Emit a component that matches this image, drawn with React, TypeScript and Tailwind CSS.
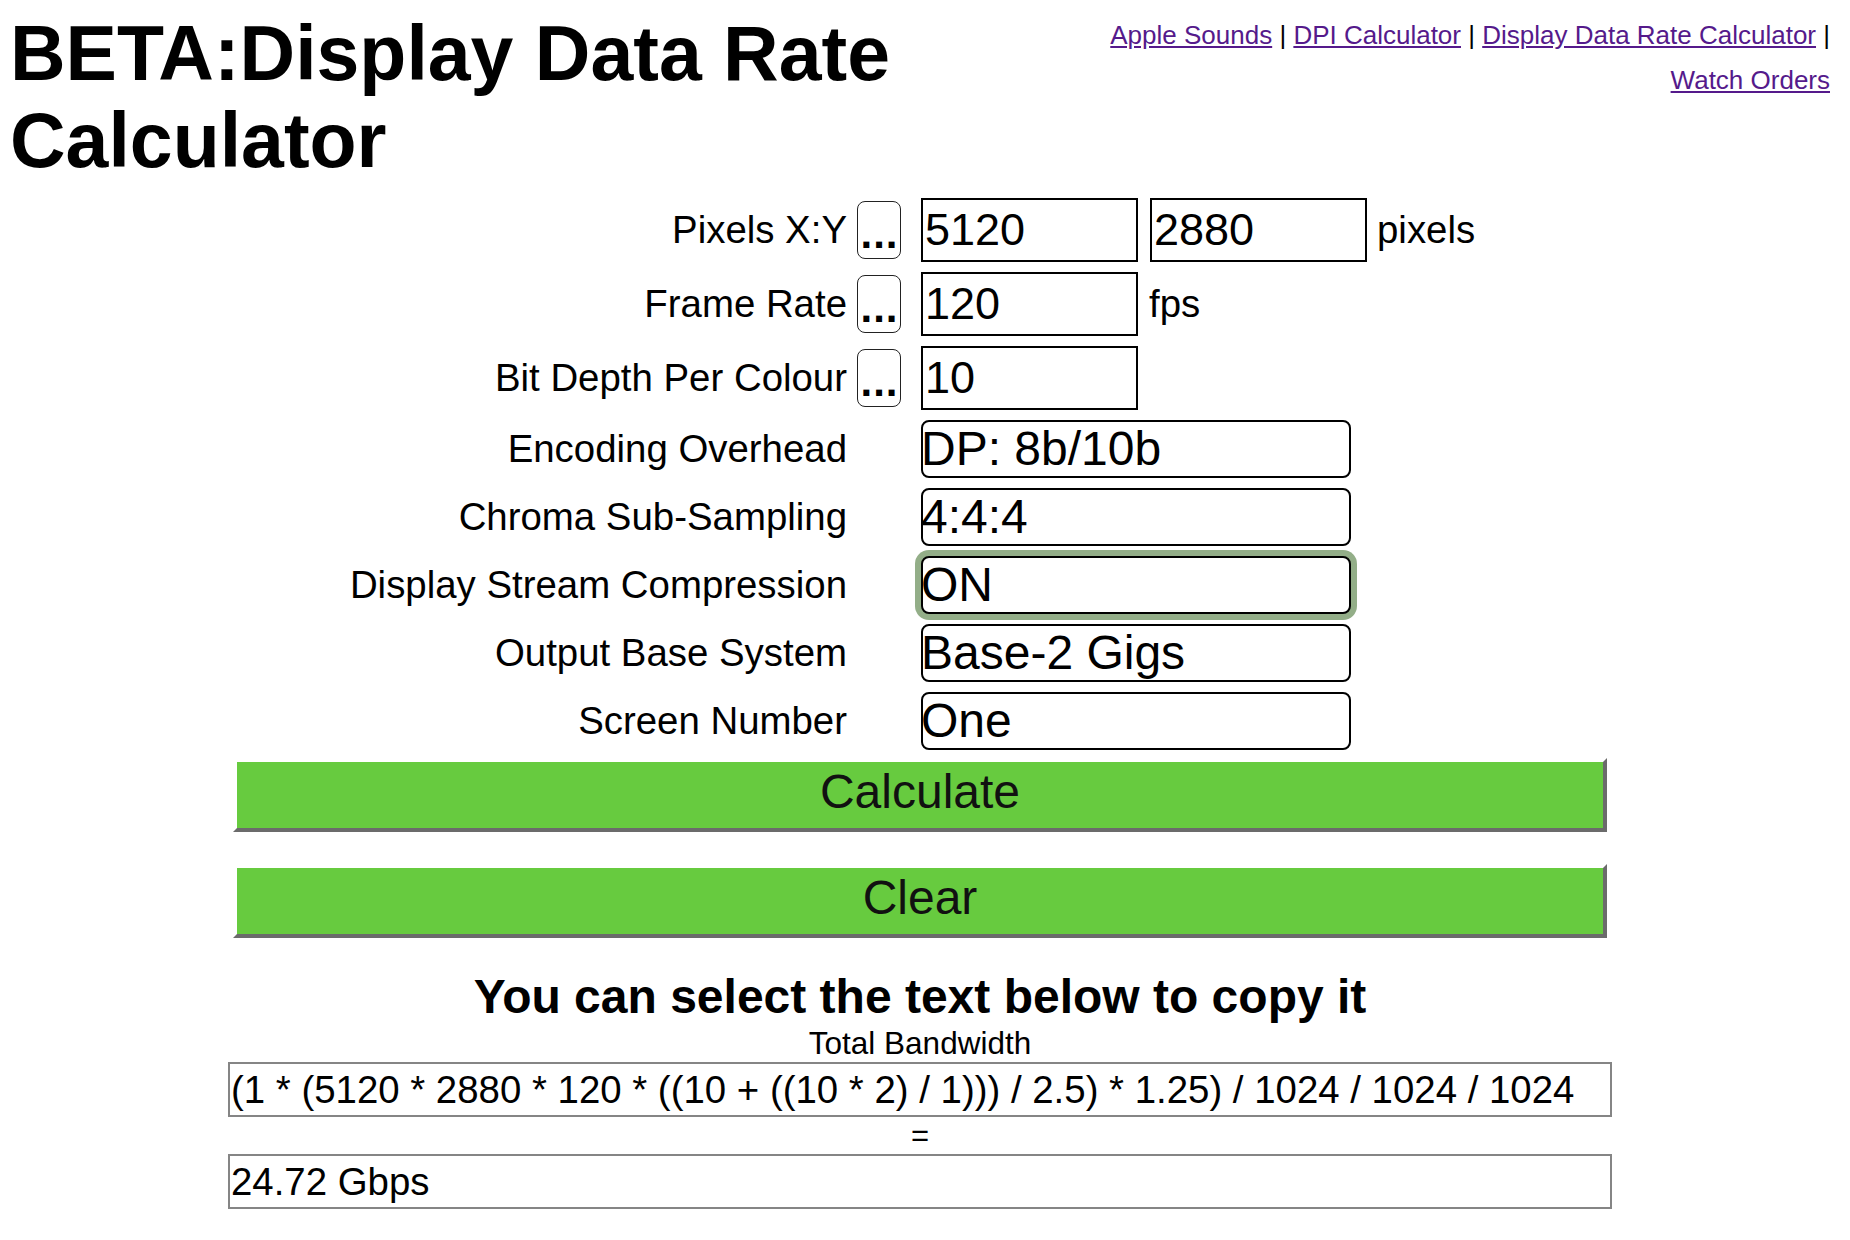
import React from 'react'

const Row = ({ label, dots, children }: { label: string; dots?: boolean; children: React.ReactNode }) => (
  <div className="flex items-center">
    <div className="w-[847px] text-right text-[38.4px] leading-[44px] whitespace-nowrap">{label}</div>
    <div className="w-[74px] pl-[10px] flex items-center">
      {dots && (
        <button className="w-[44px] h-[58px] flex items-end justify-center rounded-[8px] border-[1.5px] border-[#222] bg-white">
          <span className="text-[42px] font-bold leading-[48px] tracking-[1px] pl-[1px]">...</span>
        </button>
      )}
    </div>
    {children}
  </div>
)

const Field = ({ value, className = '' }: { value: string; className?: string }) => (
  <input
    readOnly
    value={value}
    className={`w-[217px] h-[64px] border-2 border-black bg-white px-[2px] text-[45px] outline-none ${className}`}
  />
)

const Choice = ({ value, focused }: { value: string; focused?: boolean }) => (
  <div
    className={
      focused
        ? 'w-[430px] h-[58px] rounded-[8px] border-2 border-black bg-white text-[48px] leading-[54px] whitespace-nowrap shadow-[0_0_0_6px_#93ae88]'
        : 'w-[430px] h-[58px] rounded-[8px] border-2 border-black bg-white text-[48px] leading-[54px] whitespace-nowrap'
    }
  >
    <span className="block -ml-[2px]">{value}</span>
  </div>
)

const App = () => {
  return (
    <div className="min-h-screen w-[1850px] bg-white text-black font-['Liberation_Sans',Arial,sans-serif]">
      {/* Header */}
      <div className="flex items-start">
        <h1 className="flex-1 pl-[10px] mt-[10px] text-[77px] font-bold leading-[87px]">
          BETA:Display Data Rate Calculator
        </h1>
        <nav className="w-[730px] mr-[20px] mt-[13px] text-right text-[26px] leading-[45px]">
          <a href="#" className="text-[#551a8b] underline">Apple Sounds</a>
          {' | '}
          <a href="#" className="text-[#551a8b] underline">DPI Calculator</a>
          {' | '}
          <a href="#" className="text-[#551a8b] underline">Display Data Rate Calculator</a>
          {' | '}
          <a href="#" className="text-[#551a8b] underline">Watch Orders</a>
        </nav>
      </div>

      {/* Form */}
      <div className="mt-[14px] flex flex-col gap-[10px]">
        <Row label="Pixels X:Y" dots>
          <Field value="5120" />
          <Field value="2880" className="ml-[12px]" />
          <span className="ml-[10px] text-[38.4px] leading-[44px]">pixels</span>
        </Row>
        <Row label="Frame Rate" dots>
          <Field value="120" />
          <span className="ml-[11px] text-[38.4px] leading-[44px]">fps</span>
        </Row>
        <Row label="Bit Depth Per Colour" dots>
          <Field value="10" />
        </Row>
        <Row label="Encoding Overhead">
          <Choice value="DP: 8b/10b" />
        </Row>
        <Row label="Chroma Sub-Sampling">
          <Choice value="4:4:4" />
        </Row>
        <Row label="Display Stream Compression">
          <Choice value="ON" focused />
        </Row>
        <Row label="Output Base System">
          <Choice value="Base-2 Gigs" />
        </Row>
        <Row label="Screen Number">
          <Choice value="One" />
        </Row>
      </div>

      {/* Actions and output */}
      <div className="ml-[228px] w-[1384px] flex flex-col">
        <div className="mt-[8px] px-[5px] flex flex-col gap-[32px]">
          <button className="h-[74px] pb-[7px] bg-[#67cb3f] border-4 border-t-white border-l-white border-r-[#6b6b6b] border-b-[#6b6b6b] text-[48px] leading-[55px] text-[#111]">
            Calculate
          </button>
          <button className="h-[74px] pb-[7px] bg-[#67cb3f] border-4 border-t-white border-l-white border-r-[#6b6b6b] border-b-[#6b6b6b] text-[48px] leading-[55px] text-[#111]">
            Clear
          </button>
        </div>

        <h2 className="mt-[31px] text-center text-[48px] font-bold leading-[55px]">
          You can select the text below to copy it
        </h2>
        <div className="text-center text-[31.5px] leading-[38px]">Total Bandwidth</div>
        <div className="h-[55px] flex items-center border-2 border-[#858585] pl-[1px] text-[38.4px] whitespace-nowrap">
          (1 * (5120 * 2880 * 120 * ((10 + ((10 * 2) / 1))) / 2.5) * 1.25) / 1024 / 1024 / 1024
        </div>
        <div className="text-center text-[31px] leading-[37px]">=</div>
        <div className="h-[55px] flex items-center border-2 border-[#858585] pl-[1px] text-[38.4px] whitespace-nowrap">
          24.72 Gbps
        </div>
      </div>
    </div>
  )
}

export default App
